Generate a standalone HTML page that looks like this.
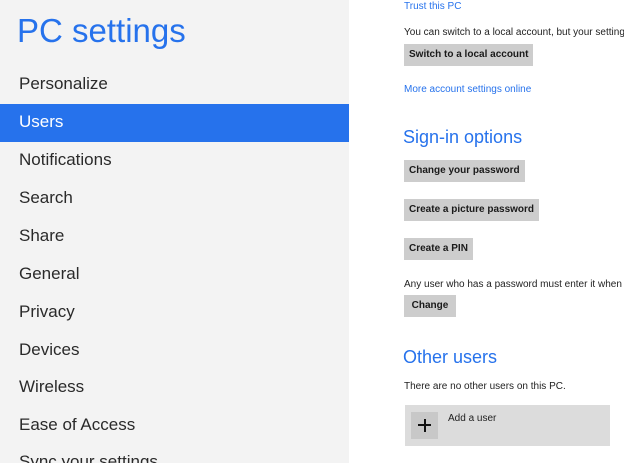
<!DOCTYPE html>
<html><head><style>
*{margin:0;padding:0;box-sizing:border-box}
html,body{width:624px;height:463px;overflow:hidden}
body{background:#fff;font-family:"Liberation Sans",sans-serif;position:relative}
#left{position:absolute;left:0;top:0;width:349px;height:463px;background:#f3f3f3}
.t{position:absolute;white-space:nowrap}
.nav{position:absolute;left:19px;font-size:17px;color:#2a2a2a;line-height:20px}
.sel{position:absolute;left:0;top:104px;width:349px;height:38px;background:#2672ec}
.btn{position:absolute;left:404px;height:22px;background:#cdcdcd;font-size:10px;font-weight:bold;color:#1a1a1a;padding:0 5px;line-height:22px}
.s{font-size:10px;color:#222}
.l{font-size:10px;color:#2672ec}
.h{font-size:18px;color:#2672ec}
</style></head><body>
<div id="left"></div>
<div class="t" style="left:17px;top:12px;font-size:33px;color:#2672ec">PC settings</div>
<div class="sel"></div>
<div class="nav" style="top:74px">Personalize</div>
<div class="nav" style="top:112px;color:#fff">Users</div>
<div class="nav" style="top:150px">Notifications</div>
<div class="nav" style="top:188px">Search</div>
<div class="nav" style="top:226px">Share</div>
<div class="nav" style="top:264px">General</div>
<div class="nav" style="top:302px">Privacy</div>
<div class="nav" style="top:340px">Devices</div>
<div class="nav" style="top:377px">Wireless</div>
<div class="nav" style="top:415px">Ease of Access</div>
<div class="nav" style="top:452px">Sync your settings</div>

<div class="t l" style="left:404px;top:1px">Trust this PC</div>
<div class="t s" style="left:404px;top:27px">You can switch to a local account, but your settings</div>
<div class="btn" style="top:44px">Switch to a local account</div>
<div class="t l" style="left:404px;top:84px">More account settings online</div>
<div class="t h" style="left:403px;top:127px">Sign-in options</div>
<div class="btn" style="top:160px">Change your password</div>
<div class="btn" style="top:199px">Create a picture password</div>
<div class="btn" style="top:238px">Create a PIN</div>
<div class="t s" style="left:404px;top:279px">Any user who has a password must enter it when w</div>
<div class="btn" style="top:295px;width:52px;text-align:center">Change</div>
<div class="t h" style="left:403px;top:347px">Other users</div>
<div class="t s" style="left:404px;top:381px">There are no other users on this PC.</div>
<div style="position:absolute;left:405px;top:405px;width:205px;height:41px;background:#dcdcdc"></div>
<div style="position:absolute;left:411px;top:412px;width:27px;height:27px;background:#c8c8c8"></div>
<div style="position:absolute;left:418px;top:424px;width:13px;height:2px;background:#111"></div>
<div style="position:absolute;left:423.5px;top:419px;width:2px;height:13px;background:#111"></div>
<div class="t s" style="left:448px;top:413px">Add a user</div>
</body></html>
